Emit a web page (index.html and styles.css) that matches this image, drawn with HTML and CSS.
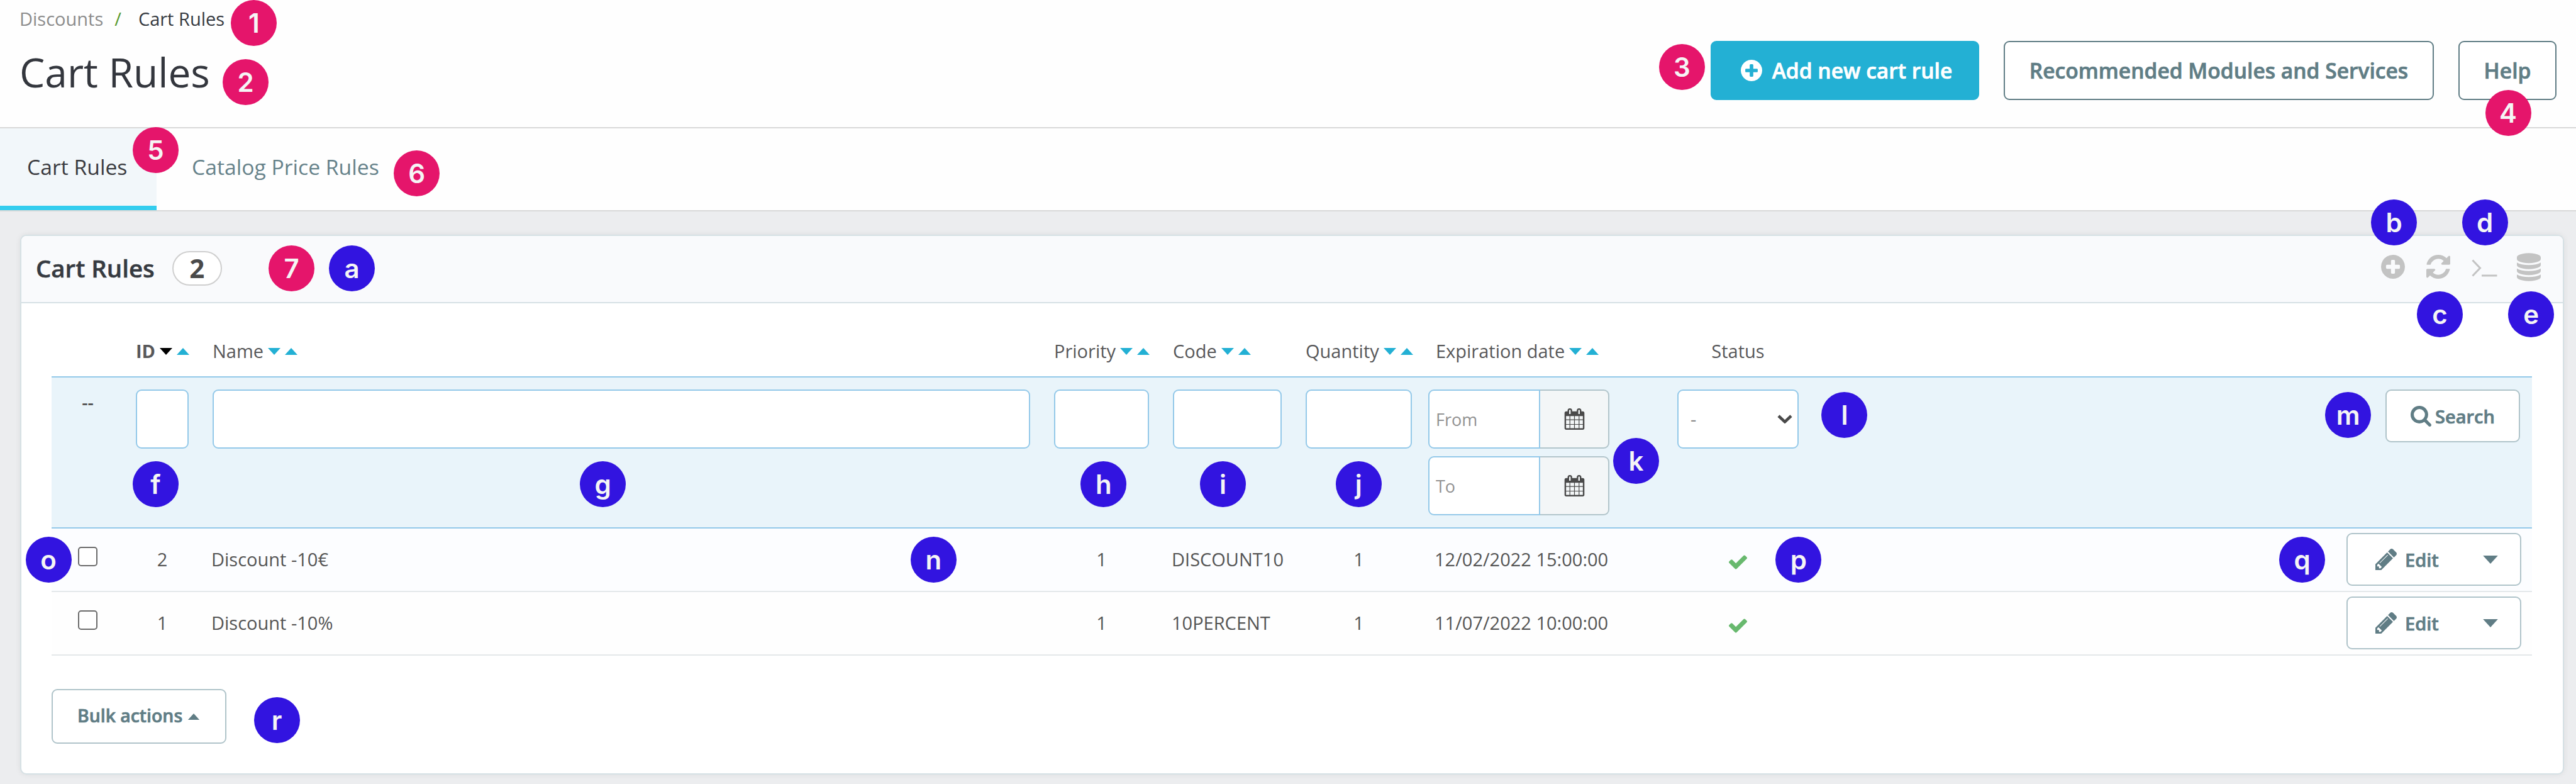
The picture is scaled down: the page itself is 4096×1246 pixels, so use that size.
FILE: index.html
```html
<!DOCTYPE html>
<html lang="en">
<head>
<meta charset="utf-8">
<title>Cart Rules</title>
<link rel="stylesheet" href="styles.css">
</head>
<body>
<svg class="sprite" aria-hidden="true">
  <symbol id="i-plus" viewBox="128 128 1536 1536"><path d="M1344 960v-128q0-26-19-45t-45-19h-256v-256q0-26-19-45t-45-19h-128q-26 0-45 19t-19 45v256h-256q-26 0-45 19t-19 45v128q0 26 19 45t45 19h256v256q0 26 19 45t45 19h128q26 0 45-19t19-45v-256h256q26 0 45-19t19-45zm320-64q0 209-103 385.5t-279.5 279.5-385.5 103-385.5-103-279.5-279.5-103-385.5 103-385.5 279.5-279.5 385.5-103 385.5 103 279.5 279.5 103 385.5z"/></symbol>
  <symbol id="i-refresh" viewBox="128 128 1536 1536"><path d="M1639 1056q0 5-1 7-64 268-268 434.5t-478 166.5q-146 0-282.5-55t-243.5-157l-129 129q-19 19-45 19t-45-19-19-45v-448q0-26 19-45t45-19h448q26 0 45 19t19 45-19 45l-137 137q71 66 161 102t187 36q134 0 250-65t186-179q11-17 53-117 8-23 30-23h192q13 0 22.5 9.5t9.5 22.5zm25-800v448q0 26-19 45t-45 19h-448q-26 0-45-19t-19-45 19-45l138-138q-148-137-349-137-134 0-250 65t-186 179q-11 17-53 117-8 23-30 23h-199q-13 0-22.5-9.5t-9.5-22.5v-7q65-268 270-434.5t480-166.5q146 0 284 55.5t245 156.5l130-129q19-19 45-19t45 19 19 45z"/></symbol>
  <symbol id="i-terminal" viewBox="0 0 41 28"><path d="M1.5 1.5 13.5 14 1.5 26.5M16 26h24.500" fill="none" stroke="currentColor" stroke-width="3"/></symbol>
  <symbol id="i-database" viewBox="128 0 1536 1792"><path d="M896 768q237 0 443-43t325-127v170q0 69-103 128t-280 93.500-385 34.500-385-34.500-280-93.500-103-128v-170q119 84 325 127t443 43zm0 768q237 0 443-43t325-127v170q0 69-103 128t-280 93.500-385 34.500-385-34.500-280-93.500-103-128v-170q119 84 325 127t443 43zm0-384q237 0 443-43t325-127v170q0 69-103 128t-280 93.500-385 34.500-385-34.500-280-93.500-103-128v-170q119 84 325 127t443 43zm0-1152q208 0 385 34.500t280 93.500 103 128v128q0 69-103 128t-280 93.500-385 34.500-385-34.500-280-93.500-103-128v-128q0-69 103-128t280-93.500 385-34.500z"/></symbol>
  <symbol id="i-calendar" viewBox="64 0 1664 1792"><path d="M192 1664h288v-288h-288v288zm352 0h320v-288h-320v288zm-352-352h288v-320h-288v320zm352 0h320v-320h-320v320zm-352-384h288v-288h-288v288zm736 736h320v-288h-320v288zm-384-736h320v-288h-320v288zm768 736h288v-288h-288v288zm-384-352h320v-320h-320v320zm-352-864v-288q0-13-9.500-22.500t-22.500-9.500h-64q-13 0-22.500 9.500t-9.500 22.500v288q0 13 9.500 22.500t22.500 9.500h64q13 0 22.500-9.500t9.500-22.500zm736 864h288v-320h-288v320zm-384-384h320v-288h-320v288zm384 0h288v-288h-288v288zm32-480v-288q0-13-9.500-22.500t-22.500-9.500h-64q-13 0-22.500 9.500t-9.500 22.500v288q0 13 9.500 22.500t22.500 9.500h64q13 0 22.500-9.500t9.500-22.500zm384-64v1280q0 52-38 90t-90 38h-1408q-52 0-90-38t-38-90v-1280q0-52 38-90t90-38h128v-96q0-66 47-113t113-47h64q66 0 113 47t47 113v96h384v-96q0-66 47-113t113-47h64q66 0 113 47t47 113v96h128q52 0 90 38t38 90z"/></symbol>
  <symbol id="i-check" viewBox="121 334 1550 1188"><path d="M1671 566q0 40-28 68l-724 724-136 136q-28 28-68 28t-68-28l-136-136-362-362q-28-28-28-68t28-68l136-136q28-28 68-28t68 28l294 295 656-657q28-28 68-28t68 28l136 136q28 28 28 68z"/></symbol>
  <symbol id="i-pencil" viewBox="128 149 1515 1515"><path d="M491 1536l91-91-235-235-91 91v107h128v128h107zm523-928q0-22-22-22-10 0-17 7l-542 542q-7 7-7 17 0 22 22 22 10 0 17-7l542-542q7-7 7-17zm-54-192l416 416-832 832h-416v-416zm683 96q0 53-37 90l-166 166-416-416 166-165q36-38 90-38 53 0 91 38l235 234q37 39 37 91z"/></symbol>
  <symbol id="i-search" viewBox="64 128 1664 1664"><path d="M1216 832q0-185-131.500-316.500t-316.500-131.500-316.500 131.500-131.500 316.500 131.500 316.500 316.500 131.500 316.500-131.500 131.500-316.500zm512 832q0 52-38 90t-90 38q-54 0-90-38l-343-342q-179 124-399 124-143 0-273.500-55.500t-225-150-150-225-55.500-273.500 55.500-273.500 150-225 225-150 273.500-55.500 273.500 55.500 225 150 150 225 55.500 273.500q0 220-124 399l343 343q37 37 37 90z"/></symbol>
  <symbol id="i-down" viewBox="0 0 20 11"><path d="M0 0h20L10 11z"/></symbol>
  <symbol id="i-up" viewBox="0 0 20 11"><path d="M0 11h20L10 0z"/></symbol>
  <symbol id="i-chevron" viewBox="0 0 24 14"><path d="M2 2l10 9.500L22 2" fill="none" stroke="currentColor" stroke-width="4.500"/></symbol>
</svg>

<header class="page-head">
  <div class="head-left">
    <nav class="breadcrumb"><a>Discounts</a><span class="sep">/</span><span class="here">Cart Rules</span></nav>
    <h1 class="title">Cart Rules</h1>
  </div>
  <div class="head-actions">
    <button class="btn btn-primary"><svg class="ic-add"><use href="#i-plus"/></svg><span>Add new cart rule</span></button>
    <button class="btn btn-modules">Recommended Modules and Services</button>
    <button class="btn btn-help">Help</button>
  </div>
</header>

<nav class="tabs">
  <a class="tab active">Cart Rules</a>
  <a class="tab">Catalog Price Rules</a>
</nav>

<main class="content">
  <section class="panel">
    <div class="panel-head">
      <h2 class="panel-title">Cart Rules</h2>
      <span class="count">2</span>
      <div class="tools">
        <svg class="tool"><use href="#i-plus"/></svg>
        <svg class="tool"><use href="#i-refresh"/></svg>
        <svg class="tool tool-term"><use href="#i-terminal"/></svg>
        <svg class="tool tool-db"><use href="#i-database"/></svg>
      </div>
    </div>

    <div class="table">
      <div class="row head">
        <div class="cell"></div>
        <div class="cell sorted"><span>ID</span><svg class="arrow on"><use href="#i-down"/></svg><svg class="arrow"><use href="#i-up"/></svg></div>
        <div class="cell"><span>Name</span><svg class="arrow"><use href="#i-down"/></svg><svg class="arrow"><use href="#i-up"/></svg></div>
        <div class="cell"><span>Priority</span><svg class="arrow"><use href="#i-down"/></svg><svg class="arrow"><use href="#i-up"/></svg></div>
        <div class="cell"><span>Code</span><svg class="arrow"><use href="#i-down"/></svg><svg class="arrow"><use href="#i-up"/></svg></div>
        <div class="cell"><span>Quantity</span><svg class="arrow"><use href="#i-down"/></svg><svg class="arrow"><use href="#i-up"/></svg></div>
        <div class="cell"><span>Expiration date</span><svg class="arrow"><use href="#i-down"/></svg><svg class="arrow"><use href="#i-up"/></svg></div>
        <div class="cell center">Status</div>
        <div class="cell"></div>
      </div>

      <div class="row filter">
        <div class="cell center dashes">--</div>
        <div class="cell"><div class="field"></div></div>
        <div class="cell"><div class="field"></div></div>
        <div class="cell"><div class="field"></div></div>
        <div class="cell"><div class="field"></div></div>
        <div class="cell"><div class="field"></div></div>
        <div class="cell dates">
          <div class="date"><span class="date-text">From</span><span class="date-btn"><svg class="ic-cal"><use href="#i-calendar"/></svg></span></div>
          <div class="date"><span class="date-text">To</span><span class="date-btn"><svg class="ic-cal"><use href="#i-calendar"/></svg></span></div>
        </div>
        <div class="cell"><div class="field select"><span>-</span><svg class="ic-chev"><use href="#i-chevron"/></svg></div></div>
        <div class="cell actions"><button class="btn-sm search"><svg class="ic-search"><use href="#i-search"/></svg><span>Search</span></button></div>
      </div>

      <div class="row data odd">
        <div class="cell center"><span class="box"></span></div>
        <div class="cell center">2</div>
        <div class="cell">Discount -10€</div>
        <div class="cell center">1</div>
        <div class="cell">DISCOUNT10</div>
        <div class="cell center">1</div>
        <div class="cell">12/02/2022 15:00:00</div>
        <div class="cell center"><svg class="ic-check"><use href="#i-check"/></svg></div>
        <div class="cell actions"><button class="btn-sm edit"><svg class="ic-pencil"><use href="#i-pencil"/></svg><span>Edit</span><svg class="ic-caret"><use href="#i-down"/></svg></button></div>
      </div>

      <div class="row data">
        <div class="cell center"><span class="box"></span></div>
        <div class="cell center">1</div>
        <div class="cell">Discount -10%</div>
        <div class="cell center">1</div>
        <div class="cell">10PERCENT</div>
        <div class="cell center">1</div>
        <div class="cell">11/07/2022 10:00:00</div>
        <div class="cell center"><svg class="ic-check"><use href="#i-check"/></svg></div>
        <div class="cell actions"><button class="btn-sm edit"><svg class="ic-pencil"><use href="#i-pencil"/></svg><span>Edit</span><svg class="ic-caret"><use href="#i-down"/></svg></button></div>
      </div>
    </div>

    <button class="btn-sm bulk"><span>Bulk actions</span><svg class="ic-bulk"><use href="#i-up"/></svg></button>
  </section>
</main>

<span class="pin pink p1">1</span>
<span class="pin pink p2">2</span>
<span class="pin pink p3">3</span>
<span class="pin pink p4">4</span>
<span class="pin pink p5">5</span>
<span class="pin pink p6">6</span>
<span class="pin pink p7">7</span>
<span class="pin pa">a</span>
<span class="pin pb">b</span>
<span class="pin pc">c</span>
<span class="pin pd">d</span>
<span class="pin pe">e</span>
<span class="pin pf">f</span>
<span class="pin pg">g</span>
<span class="pin ph">h</span>
<span class="pin pi">i</span>
<span class="pin pj">j</span>
<span class="pin pk">k</span>
<span class="pin pl">l</span>
<span class="pin pm">m</span>
<span class="pin pn">n</span>
<span class="pin po">o</span>
<span class="pin pp">p</span>
<span class="pin pq">q</span>
<span class="pin pr">r</span>
</body>
</html>
```

FILE: styles.css
```css
* { box-sizing: border-box; }

body {
  position: relative;
  margin: 0;
  height: 1246px;
  overflow: hidden;
  display: flex;
  flex-direction: column;
  background: #ecedef;
  color: #555;
  font: 29px/40px "Open Sans", "Noto Sans", sans-serif;
}

svg { display: block; flex: none; fill: currentColor; }
.sprite { position: absolute; width: 0; height: 0; }
h1, h2 { margin: 0; }
button { margin: 0; font-family: inherit; }

/* Page header */
.page-head {
  height: 204px;
  display: flex;
  justify-content: space-between;
  align-items: flex-start;
  padding: 10px 31px 0 31px;
  background: #fefefe;
  border-bottom: 2px solid #d9d9d9;
}
.breadcrumb { display: flex; color: #8c8c8c; }
.breadcrumb .sep { margin: 0 27px 0 18px; color: #599a2e; }
.breadcrumb .here { color: #363a41; }
.title {
  margin-top: 25px;
  font-size: 64px;
  line-height: 80px;
  font-weight: 400;
  color: #33363d;
}
.head-actions { display: flex; gap: 39px; margin-top: 55px; }
.btn {
  height: 94px;
  display: flex;
  align-items: center;
  justify-content: center;
  padding: 0;
  border: 2px solid #607d85;
  border-radius: 9px;
  background: #fff;
  color: #607d85;
  font-size: 33.6px;
  font-weight: 600;
  -webkit-text-stroke: 0.7px currentColor;
  white-space: nowrap;
}
.btn-primary { width: 427px; gap: 16px; padding-left: 5px; background: #23b0d4; border-color: #23b0d4; color: #fff; }
.ic-add { width: 34px; height: 34px; }
.btn-modules { width: 684px; }
.btn-help { width: 156px; }

/* Tabs */
.tabs {
  height: 132px;
  display: flex;
  background: #fefefe;
  border-bottom: 2px solid #d9d9d9;
}
.tab {
  display: flex;
  align-items: center;
  padding: 0 56px 8px;
  font-size: 33.7px;
  color: #66828a;
}
.tab.active {
  width: 249px;
  padding: 0 0 1px 43px;
  background: #f2f7fa;
  border-bottom: 7px solid #34cdee;
  color: #3a3b40;
}

/* Panel */
.content { padding: 37px 20px 0 32px; }
.panel {
  width: calc(100% + 1px);
  height: 858px;
  background: #fff;
  border: 2px solid #d6e1e5;
  border-radius: 10px;
  box-shadow: 0 0 10px rgba(0, 0, 0, 0.07);
}
.panel-head {
  height: 107px;
  display: flex;
  align-items: center;
  padding: 0 35px 3px 23px;
  background: #f9fafc;
  border-bottom: 2px solid #d6e1e5;
  border-radius: 8px 8px 0 0;
}
.panel-title { font-size: 38.4px; font-weight: 600; -webkit-text-stroke: 0.5px currentColor; color: #363a41; }
.count {
  width: 79px;
  height: 55px;
  margin-left: 28px;
  display: flex;
  align-items: center;
  justify-content: center;
  border: 2px solid #cfcfcf;
  border-radius: 28px;
  background: #fff;
  color: #4a4a4a;
  font-size: 42px;
  font-weight: 700;
}
.tools { display: flex; align-items: center; gap: 34px; margin: -4px 0 0 auto; color: #c3c3c3; }
.tool { width: 38px; height: 38px; }
.tool-term { width: 41px; height: 28px; margin-top: 4px; margin-right: -3px; }
.tool-db { height: 45px; }

/* Table */
.table { margin: 0 49px 0 48px; }
.row {
  display: grid;
  grid-template-columns: 115px 122px 1338px 189px 211px 207px 384px 231px 1fr;
}
.cell { display: flex; align-items: center; padding: 0 17px; white-space: nowrap; }
.cell.center { justify-content: center; padding: 0; }

.head { height: 116px; padding-top: 56px; align-content: start; color: #58585a; }
.head .cell { padding-left: 19px; }
.head .cell.center { padding: 0; }
.head .sorted { font-weight: 700; }
.arrow { width: 20px; height: 11px; margin-left: 7px; color: #23b0d4; }
.arrow.on { color: #000; }

.filter {
  height: 242px;
  padding-top: 19px;
  background: #e9f4fa;
  border-top: 2px solid #94c9e9;
  border-bottom: 2px solid #94c9e9;
}
.filter .cell { align-items: flex-start; padding: 0 19px; }
.filter .cell.dashes { padding: 0; color: #555; font-weight: 600; }
.field {
  width: 100%;
  height: 94px;
  background: #fff;
  border: 2px solid #94c9e9;
  border-radius: 9px;
}
.select {
  display: flex;
  align-items: center;
  justify-content: space-between;
  padding: 0 8px 0 19px;
  color: #888;
}
.ic-chev { width: 24px; height: 14px; color: #4a4a4a; }
.filter .dates { flex-direction: column; gap: 12px; padding: 0 0 0 7px; }
.date { display: flex; width: 288px; height: 94px; }
.date-text {
  width: 178px;
  display: flex;
  align-items: center;
  padding: 2px 0 0 10px;
  background: #fff;
  border: 2px solid #94c9e9;
  border-radius: 9px 0 0 9px;
  color: #929292;
  font-size: 27px;
}
.date-btn {
  flex: 1;
  display: flex;
  align-items: center;
  justify-content: center;
  background: #f3f6f7;
  border: 2px solid #b2c5cb;
  border-left: 0;
  border-radius: 0 9px 9px 0;
}
.ic-cal { width: 33px; height: 34px; color: #4a4a4a; }

.data { height: 101px; padding-bottom: 1px; border-bottom: 2px solid #e4e8ea; background: #fefefe; }
.data.odd { background: #fcfdff; }
.box {
  width: 31px;
  height: 31px;
  margin-bottom: 9px;
  background: #fff;
  border: 2px solid #6b6b6b;
  border-radius: 5px;
}
.ic-check { width: 29px; height: 23px; margin-top: 8px; color: #68b96e; }

/* Small buttons */
.actions { justify-content: flex-end; }
.btn-sm {
  display: flex;
  align-items: center;
  padding: 0;
  background: #fff;
  border: 2px solid #b0c4ca;
  border-radius: 9px;
  color: #607d85;
  font-size: 29px;
  font-weight: 600;
  -webkit-text-stroke: 0.7px currentColor;
}
.search { width: 214px; height: 84px; justify-content: center; gap: 6px; }
.ic-search { width: 33px; height: 33px; }
.edit { width: 278px; height: 84px; padding-left: 44px; }
.ic-pencil { width: 34px; height: 34px; margin-right: 13px; }
.ic-caret { width: 24px; height: 13px; margin-left: auto; margin-right: 35px; }
.bulk { width: 278px; height: 87px; margin: 53px 0 0 48px; padding: 0 0 4px 39px; font-size: 28.4px; }
.ic-bulk { width: 20px; height: 10px; margin: 5px 0 0 8px; }

/* Numbered callouts */
.pin {
  position: absolute;
  width: 73px;
  height: 73px;
  margin: -36.500px 0 0 -36.500px;
  border-radius: 50%;
  background: #3214e0;
  color: #f5f5f5;
  font: 600 42px/73px Inter, "Liberation Sans", sans-serif;
  text-align: center;
}
.pink { background: #e5156b; }
.p1 { left: 403.8px; top: 36.5px; }
.p2 { left: 390.6px; top: 130.9px; }
.p3 { left: 2674.4px; top: 106.6px; }
.p4 { left: 3988px; top: 179.8px; }
.p5 { left: 247.4px; top: 238.9px; }
.p6 { left: 662.6px; top: 275.1px; }
.p7 { left: 463.7px; top: 426.6px; }
.pa { left: 559.6px; top: 426.6px; }
.pb { left: 3806.5px; top: 353.6px; }
.pc { left: 3879.6px; top: 499.8px; }
.pd { left: 3951.1px; top: 353.6px; }
.pe { left: 4024.6px; top: 499.8px; }
.pf { left: 247.4px; top: 769.8px; }
.pg { left: 958.7px; top: 769.8px; }
.ph { left: 1754.8px; top: 769.8px; }
.pi { left: 1944.6px; top: 769.8px; }
.pj { left: 2160.2px; top: 769.8px; }
.pk { left: 2601.4px; top: 732.8px; }
.pl { left: 2932.9px; top: 659.3px; }
.pm { left: 3733.6px; top: 659.3px; }
.pn { left: 1484.4px; top: 889.9px; }
.po { left: 77.1px; top: 889.9px; }
.pp { left: 2859.8px; top: 889.9px; }
.pq { left: 3660.5px; top: 889.9px; }
.pr { left: 440.2px; top: 1144.2px; }
```
